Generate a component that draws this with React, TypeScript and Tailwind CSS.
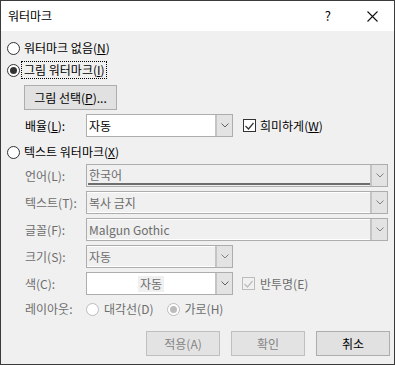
import type { ReactNode } from 'react';

const font = "font-['Noto_Sans_CJK_KR','Noto_Sans',sans-serif]";

function Radio({ checked, disabled }: { checked?: boolean; disabled?: boolean }) {
  return (
    <span
      className={`w-[13px] h-[13px] shrink-0 rounded-full border bg-white flex items-center justify-center ${
        disabled ? 'border-[#bcbcbc]' : 'border-[#333333]'
      }`}
    >
      {checked && (
        <span className={`w-[7px] h-[7px] rounded-full ${disabled ? 'bg-[#bcbcbc]' : 'bg-[#333333]'}`} />
      )}
    </span>
  );
}

function Check({ disabled }: { disabled?: boolean }) {
  const c = disabled ? '#bcbcbc' : '#333333';
  return (
    <span
      className={`w-[13px] h-[13px] shrink-0 border flex items-center justify-center ${
        disabled ? 'border-[#bcbcbc] bg-[#f0f0f0]' : 'border-[#333333] bg-white'
      }`}
    >
      <svg width="9" height="8" viewBox="0 0 9 8">
        <polyline points="0.5,4 3.5,7 8.5,1" fill="none" stroke={c} strokeWidth="1.2" />
      </svg>
    </span>
  );
}

function Chevron({ disabled }: { disabled?: boolean }) {
  return (
    <svg width="8" height="5" viewBox="0 0 8 5">
      <polyline points="0.5,0.5 4,4 7.5,0.5" fill="none" stroke={disabled ? '#808080' : '#606060'} strokeWidth="1" />
    </svg>
  );
}

function Combo({
  w,
  disabled,
  children,
  inner,
}: {
  w: string;
  disabled?: boolean;
  children: ReactNode;
  inner?: string;
}) {
  return (
    <div
      className={`${w} h-[23px] flex border border-[#adadad] ${disabled ? 'bg-[#f0f0f0] text-[#6d6d6d]' : 'bg-white text-black'}`}
    >
      <div className={`flex-1 min-w-0 flex ${inner ?? ''}`}>{children}</div>
      <div className="w-[17px] shrink-0 border-l-2 border-[#c4c4c4] bg-[#e3e3e3] flex items-center justify-center">
        <Chevron disabled={disabled} />
      </div>
    </div>
  );
}

function Label({ children, disabled }: { children: ReactNode; disabled?: boolean }) {
  return (
    <span className={`w-[61px] shrink-0 ${disabled ? 'text-[#6d6d6d]' : 'text-black'}`}>{children}</span>
  );
}

export default function App() {
  return (
    <div className={`w-[395px] h-[365px] border border-[#3b3b3b] bg-[#f0f0f0] flex flex-col text-[12px] leading-[16px] ${font}`}>
      {/* title bar */}
      <div className="h-[30px] bg-white flex items-center shrink-0">
        <span className="pl-[7px] text-[12px] text-black">워터마크</span>
        <span className="ml-auto text-[13px] text-black">?</span>
        <svg className="ml-[36px] mr-[16px]" width="11" height="11" viewBox="0 0 11 11">
          <path d="M0.5 0.5 L10.5 10.5 M10.5 0.5 L0.5 10.5" stroke="#111" strokeWidth="1.1" />
        </svg>
      </div>

      <div className="flex flex-col">
        <div className="mt-[6px] h-[22px] flex items-center pl-[6px]">
          <Radio />
          <span className="ml-[4px]">
            워터마크 없음(<u>N</u>)
          </span>
        </div>
        <div className="h-[22px] flex items-center pl-[6px]">
          <Radio checked />
          <span className="ml-[1px] h-[18px] flex items-center pl-[2px] pr-[1px] border border-dotted border-black">
            그림 워터마크(<u>I</u>)
          </span>
        </div>
        <div className="mt-[4px] pl-[23px]">
          <button className="w-[93px] h-[25px] bg-[#e1e1e1] border border-[#adadad] flex items-center justify-center">
            그림 선택(<u>P</u>)...
          </button>
        </div>
        <div className="mt-[4px] h-[23px] flex items-center pl-[24px]">
          <Label>
            배율(<u>L</u>):
          </Label>
          <Combo w="w-[147px]" inner="items-center pl-[2px]">
            자동
          </Combo>
          <span className="ml-[10px]">
            <Check />
          </span>
          <span className="ml-[4px]">
            희미하게(<u>W</u>)
          </span>
        </div>
        <div className="mt-[4px] h-[22px] flex items-center pl-[6px]">
          <Radio />
          <span className="ml-[4px]">
            텍스트 워터마크(<u>X</u>)
          </span>
        </div>

        <div className="mt-[1px] h-[23px] flex items-center pl-[24px]">
          <Label disabled>언어(L):</Label>
          <Combo w="w-[302px]" disabled inner="flex-col pl-[1px] pt-[2px]">
            <span className="pl-[1px]">한국어</span>
            <span className="mt-auto mb-[1px] h-[3px] border-y border-[#6d6d6d]" />
          </Combo>
        </div>
        <div className="mt-[4px] h-[23px] flex items-center pl-[24px]">
          <Label disabled>텍스트(T):</Label>
          <Combo w="w-[302px]" disabled inner="items-center pl-[2px] border-y border-white">
            복사 금지
          </Combo>
        </div>
        <div className="mt-[4px] h-[23px] flex items-center pl-[24px]">
          <Label disabled>글꼴(F):</Label>
          <Combo w="w-[302px]" disabled inner="items-center pl-[2px] border-y border-white">
            Malgun Gothic
          </Combo>
        </div>
        <div className="mt-[4px] h-[23px] flex items-center pl-[24px]">
          <Label disabled>크기(S):</Label>
          <Combo w="w-[147px]" disabled inner="items-center pl-[2px] border-y border-white">
            자동
          </Combo>
        </div>
        <div className="mt-[4px] h-[23px] flex items-center pl-[24px]">
          <Label disabled>색(C):</Label>
          <Combo w="w-[147px]" inner="items-center justify-center">
            <span className="bg-[#f0f0f0] px-[2px] text-[#6d6d6d]">자동</span>
          </Combo>
          <span className="ml-[9px]">
            <Check disabled />
          </span>
          <span className="ml-[5px] text-[#6d6d6d]">반투명(E)</span>
        </div>
        <div className="mt-[4px] h-[20px] flex items-center pl-[24px] text-[#6d6d6d]">
          <Label disabled>레이아웃:</Label>
          <Radio disabled />
          <span className="ml-[5px]">대각선(D)</span>
          <span className="ml-[13px]">
            <Radio checked disabled />
          </span>
          <span className="ml-[5px]">가로(H)</span>
        </div>

        <div className="mt-[12px] flex pl-[145px] gap-[11px]">
          <button className="w-[74px] h-[25px] bg-[#e3e3e3] border border-[#bfbfbf] text-[#838383] flex items-center justify-center">
            적용(A)
          </button>
          <button className="w-[74px] h-[25px] bg-[#e3e3e3] border border-[#bfbfbf] text-[#838383] flex items-center justify-center">
            확인
          </button>
          <button className="w-[74px] h-[25px] bg-[#e1e1e1] border border-[#adadad] text-black flex items-center justify-center">
            취소
          </button>
        </div>
      </div>
    </div>
  );
}
